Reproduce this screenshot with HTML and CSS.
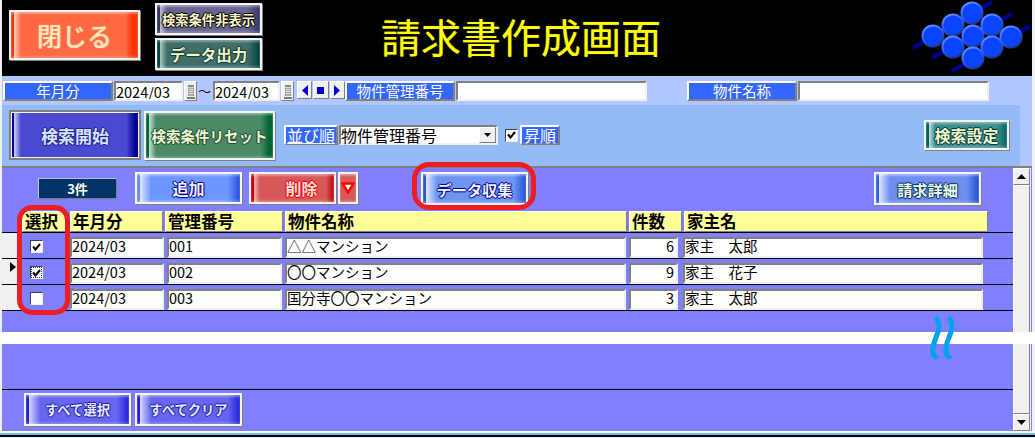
FILE: index.html
```html
<!DOCTYPE html>
<html lang="ja">
<head>
<meta charset="utf-8">
<title>請求書作成画面</title>
<link rel="stylesheet" href="styles.css">
</head>
<body>
<div class="window">
  <header class="top">
    <button class="btn close">閉じる</button>
    <div class="top-stack">
      <button class="btn slate">検索条件非表示</button>
      <button class="btn teal-dark">データ出力</button>
    </div>
    <h1 class="title">請求書作成画面</h1>
    <svg class="logo" width="133" height="75" viewBox="0 0 133 75">
      <defs>
        <linearGradient id="rim" x1="0.2" y1="0" x2="0.7" y2="1">
          <stop offset="0" stop-color="#6f94ff"/>
          <stop offset="0.5" stop-color="#2a5cf0"/>
          <stop offset="1" stop-color="#1c2f78"/>
        </linearGradient>
      </defs>
      <g stroke="#000090" stroke-width="4">
        <line x1="13" y1="48" x2="92" y2="2"/>
        <line x1="32" y1="58" x2="112" y2="14"/>
        <line x1="52" y1="71" x2="130" y2="26"/>
      </g>
      <g fill="url(#rim)">
        <circle cx="33" cy="36" r="11.500"/>
        <circle cx="53" cy="25" r="11.500"/>
        <circle cx="72" cy="13" r="11.500"/>
        <circle cx="92" cy="25" r="11.500"/>
        <circle cx="111" cy="37" r="11.500"/>
        <circle cx="53" cy="47" r="11.500"/>
        <circle cx="73" cy="36" r="11.500"/>
        <circle cx="92" cy="47" r="11.500"/>
        <circle cx="73" cy="58" r="11.500"/>
      </g>
      <g fill="#0a44ff">
        <circle cx="33" cy="36" r="9.500"/>
        <circle cx="53" cy="25" r="9.500"/>
        <circle cx="72" cy="13" r="9.500"/>
        <circle cx="92" cy="25" r="9.500"/>
        <circle cx="111" cy="37" r="9.500"/>
        <circle cx="53" cy="47" r="9.500"/>
        <circle cx="73" cy="36" r="9.500"/>
        <circle cx="92" cy="47" r="9.500"/>
        <circle cx="73" cy="58" r="9.500"/>
      </g>
    </svg>
  </header>

  <section class="filter">
    <span class="label w-110">年月分</span>
    <input class="field w-69" value="2024/03">
    <button class="cal" aria-label="カレンダー"><svg width="8" height="15" viewBox="0 0 8 15"><path d="M1 1h6v11H1z" fill="#8a8a8a"/><path d="M1 3.500h6M1 5.500h6M1 7.500h6M1 9.500h6M3 3v9M5 3v9" stroke="#eee" stroke-width=".7"/><path d="M0 14h8" stroke="#000"/></svg></button>
    <span class="tilde">～</span>
    <input class="field w-67" value="2024/03">
    <button class="cal" aria-label="カレンダー"><svg width="8" height="15" viewBox="0 0 8 15"><path d="M1 1h6v11H1z" fill="#8a8a8a"/><path d="M1 3.500h6M1 5.500h6M1 7.500h6M1 9.500h6M3 3v9M5 3v9" stroke="#eee" stroke-width=".7"/><path d="M0 14h8" stroke="#000"/></svg></button>
    <div class="nav">
      <button class="nav-btn" aria-label="前"><svg width="6" height="11" viewBox="0 0 6 11"><path d="M6 0v11L0 5.500z" fill="#0000e0"/></svg></button>
      <button class="nav-btn" aria-label="今"><svg width="7" height="7" viewBox="0 0 7 7"><path d="M0 0h7v7H0z" fill="#0000c0"/></svg></button>
      <button class="nav-btn" aria-label="次"><svg width="6" height="11" viewBox="0 0 6 11"><path d="M0 0v11l6-5.500z" fill="#0000e0"/></svg></button>
    </div>
    <span class="label w-110">物件管理番号</span>
    <input class="field w-191">
    <span class="label w-110 gap-left">物件名称</span>
    <input class="field w-191">
  </section>

  <section class="search-wrap">
    <div class="search">
      <button class="btn start">検索開始</button>
      <button class="btn reset">検索条件リセット</button>
      <span class="label sort-label">並び順</span>
      <div class="select">
        <span class="select-text">物件管理番号</span>
        <span class="select-arrow"><svg width="7" height="4" viewBox="0 0 7 4"><path d="M0 0h7L3.500 4z" fill="#000"/></svg></span>
      </div>
      <span class="check sort-check"><svg width="9" height="8" viewBox="0 0 9 8"><path d="M1 3.500l2.500 3 4.500-5.500" fill="none" stroke="#000" stroke-width="2"/></svg></span>
      <span class="label asc-label">昇順</span>
      <button class="btn settings">検索設定</button>
    </div>
  </section>

  <main class="list">
    <div class="list-scroll">
      <div class="list-main">
        <div class="toolbar">
          <span class="count">3件</span>
          <button class="btn add">追加</button>
          <button class="btn del">削除</button>
          <button class="btn del-more" aria-label="削除メニュー"><svg width="14" height="12" viewBox="0 0 14 12"><path d="M1.500 1.500h11L7 10.500z" fill="#fff" stroke="#f00" stroke-width="2.500"/></svg></button>
          <button class="btn collect">データ収集</button>
          <button class="btn detail">請求詳細</button>
        </div>

        <div class="head">
          <span class="th c-sel">選択</span>
          <span class="th h-ym">年月分</span>
          <span class="th h-no">管理番号</span>
          <span class="th h-name">物件名称</span>
          <span class="th h-cnt">件数</span>
          <span class="th h-owner">家主名</span>
        </div>

        <div class="row">
          <span class="selector"></span>
          <span class="c-sel cell-check"><span class="check"><svg width="9" height="8" viewBox="0 0 9 8"><path d="M1 3.500l2.500 3 4.500-5.500" fill="none" stroke="#000" stroke-width="2"/></svg></span></span>
          <span class="td c-ym">2024/03</span>
          <span class="td c-no">001</span>
          <span class="td c-name">△△マンション</span>
          <span class="td c-cnt">6</span>
          <span class="td c-owner">家主　太郎</span>
        </div>
        <div class="row">
          <span class="selector"><svg class="pointer" width="6" height="10" viewBox="0 0 6 10"><path d="M0 0v10l6-5z" fill="#000"/></svg></span>
          <span class="c-sel cell-check"><span class="check focus"><svg width="9" height="8" viewBox="0 0 9 8"><path d="M1 3.500l2.500 3 4.500-5.500" fill="none" stroke="#000" stroke-width="2"/></svg></span></span>
          <span class="td c-ym">2024/03</span>
          <span class="td c-no">002</span>
          <span class="td c-name">〇〇マンション</span>
          <span class="td c-cnt">9</span>
          <span class="td c-owner">家主　花子</span>
        </div>
        <div class="row">
          <span class="selector"></span>
          <span class="c-sel cell-check"><span class="check"></span></span>
          <span class="td c-ym">2024/03</span>
          <span class="td c-no">003</span>
          <span class="td c-name">国分寺〇〇マンション</span>
          <span class="td c-cnt">3</span>
          <span class="td c-owner">家主　太郎</span>
        </div>

        <div class="band"></div>
        <div class="footer">
          <button class="btn all">すべて選択</button>
          <button class="btn all">すべてクリア</button>
        </div>
      </div>
      <div class="scrollbar">
        <button class="sb-btn" aria-label="上"><svg width="9" height="5" viewBox="0 0 9 5"><path d="M0 5h9L4.500 0z" fill="#000"/></svg></button>
        <div class="sb-track"></div>
        <button class="sb-btn" aria-label="下"><svg width="9" height="5" viewBox="0 0 9 5"><path d="M0 0h9L4.500 5z" fill="#000"/></svg></button>
      </div>
    </div>
  </main>
  <div class="base"></div>

  <div class="cut"></div>
  <div class="mark mark-check"></div>
  <div class="mark mark-collect"></div>
  <svg class="squiggle" width="30" height="50" viewBox="0 0 30 50"><path d="M8 5c2 3 3 6 1 13-2 6-6 13-5 20 0 3 2 5 3 5M21 5c2 3 3 6 1 13-2 6-6 13-5 20 0 3 2 5 3 5" fill="none" stroke="#00a2e8" stroke-width="5" stroke-linecap="round"/></svg>
</div>
</body>
</html>
```
FILE: styles.css
```css
* { box-sizing: border-box; }
html, body { margin: 0; padding: 0; }
body {
  width: 1035px;
  height: 438px;
  overflow: hidden;
  background: #f0f0f0;
  font-family: "Noto Sans CJK JP", "Liberation Sans", sans-serif;
  font-size: 14px;
  color: #000;
}
.window {
  position: relative;
  width: 1035px;
  height: 438px;
  padding: 0 3px 0 2px;
  display: flex;
  flex-direction: column;
}
button { font-family: inherit; padding: 0; margin: 0; }

/* header */
.top {
  height: 76px;
  background: #000;
  display: flex;
  align-items: flex-start;
  position: relative;
}
.top-stack {
  margin: 3px 0 0 15px;
  display: flex;
  flex-direction: column;
  gap: 3px;
}
.title {
  margin: 11px 0 0 119px;
  font-size: 40px;
  line-height: 50px;
  font-weight: 400;
  color: #ffff00;
  text-shadow: 0 0 1px #808000;
}
.logo { position: absolute; left: 898px; top: 0; }

/* generic bevel button */
.btn {
  display: inline-flex;
  align-items: center;
  justify-content: center;
  border: 2px solid #f4f4f4;
  outline: 0;
  flex: none;
  font-weight: 700;
  color: #fff;
  --edge: #000;
  box-shadow: 1px 1px 0 #808080, inset 0 2px 2px rgba(255, 255, 255, .35), inset 0 -2px 2px rgba(255, 255, 255, .2);
  text-shadow: -1px 0 var(--edge), 1px 0 var(--edge), 0 -1px var(--edge), 0 1px var(--edge), 0 0 2px var(--edge);
}
.close {
  width: 131px; height: 50px; margin: 10px 0 0 7px;
  font-size: 25px; font-weight: 500; color: #ffe6b8; text-shadow: 0 0 1px #ffe6b8;
  background: linear-gradient(90deg, #ff3300 0 3px, #ffd0c0 3px, #ff6a45 10px, #ff6a45 90%, #ff3300 96%);
}
.slate {
  width: 107px; height: 32px; font-size: 13.300px; color: #fff8c8;
  background: linear-gradient(90deg, #333366 0 3px, #bcbcd8 3px, #666690 10px, #666690 88%, #333366 100%);
}
.teal-dark {
  width: 107px; height: 32px; font-size: 15.500px; color: #f0f8c8; --edge: #103838;
  background: linear-gradient(90deg, #004040 0 3px, #a8c8c0 3px, #3f6f68 10px, #3f6f68 88%, #004040 100%);
}
.start {
  width: 132px; height: 50px; font-size: 17px; color: #d8e4ff; --edge: #20208c;
  background: linear-gradient(90deg, #000099 0 3px, #d0d0f8 3px, #4a4ad0 10px, #4a4ad0 90%, #000099 97%);
  border-color: #808080;
  box-shadow: inset 0 0 0 1px #f4f4f4;
}
.reset {
  width: 131px; height: 49px; margin-left: 3px; font-size: 14.500px; color: #f0f8d0; --edge: #1c4c34;
  background: linear-gradient(90deg, #006633 0 3px, #c8e0d0 3px, #4a8a68 10px, #4a8a68 90%, #006633 97%);
}
.settings {
  width: 85px; height: 30px; margin-left: auto; margin-right: 11px; font-size: 16px; color: #f0f8d0; --edge: #003838;
  background: linear-gradient(90deg, #006060 0 3px, #c8e0e0 3px, #3f8f8f 9px, #3f8f8f 88%, #006060 100%);
}
.add {
  width: 107px; height: 32px; margin-left: 18px; font-size: 16px; color: #f4f4ff; --edge: #000090;
  background: linear-gradient(90deg, #6688ee 0 3px, #e0e8ff 3px, #6e96ff 14px, #6e96ff 88%, #1f4fd8 100%);
}
.del {
  width: 87px; height: 32px; margin-left: 7px; padding-left: 18px; font-size: 16px; color: #ffe0e0; --edge: #f00000;
  background: linear-gradient(90deg, #c00000 0 3px, #f0b0b0 3px, #d85858 9px, #d85858 90%, #c00000 100%);
}
.del-more {
  width: 20px; height: 32px; margin-left: 2px;
  background: #d85858;
}
.collect {
  width: 107px; height: 33px; margin-left: 63px; font-size: 15.200px; color: #eef4ff; --edge: #000090;
  background: linear-gradient(90deg, #2a55c8 0 3px, #e0e8ff 3px, #6e96f0 14px, #6e96f0 88%, #1f4fd8 100%);
}
.detail {
  width: 107px; height: 33px; margin-left: 346px; font-size: 15.200px; color: #f0fbe0; --edge: #003070;
  background: linear-gradient(90deg, #3060e0 0 3px, #e0e8ff 3px, #6e8ef0 14px, #6e8ef0 88%, #2050d0 100%);
}
.all {
  width: 107px; height: 33px; font-size: 13.300px; color: #e8e8ff; --edge: #2020a0;
  background: linear-gradient(90deg, #2020d0 0 3px, #d8d8ff 3px, #6666f0 14px, #6666f0 88%, #2020d8 100%);
}

/* filter bar */
.filter {
  height: 29px;
  background: #b0c8ff;
  display: flex;
  align-items: flex-start;
  padding: 5px 0 0 1px;
}
.label {
  display: inline-flex;
  align-items: center;
  justify-content: center;
  height: 20px;
  flex: none;
  background: #3366ff;
  color: #fff;
  font-size: 14.500px;
  border: 2px solid;
  border-color: #fff #808080 #808080 #fff;
  line-height: 1;
}
.w-110 { width: 110px; }
.gap-left { margin-left: 40px; }
.field {
  height: 20px;
  flex: none;
  border: 2px solid;
  border-color: #808080 #f0f0f0 #f0f0f0 #808080;
  background: #fff;
  font-family: "Noto Sans CJK JP", "Liberation Sans", sans-serif;
  font-size: 14.500px;
  padding: 0;
  margin: 0 0 0 1px;
  color: #000;
  outline: 0;
}
.w-69 { width: 69px; }
.w-67 { width: 67px; }
.w-191 { width: 191px; }
.cal {
  width: 13px; height: 20px; margin-left: 1px; flex: none;
  background: #f0f0f0;
  border: 1px solid; border-color: #fff #808080 #808080 #fff;
  display: flex; align-items: center; justify-content: center;
}
.tilde { width: 15px; height: 20px; line-height: 20px; text-align: center; font-size: 13px; flex: none; }
.nav { display: flex; gap: 1px; margin: 0 0 0 3px; flex: none; }
.nav-btn {
  width: 15.330px; height: 18px;
  background: #f0f0f0;
  border: 1px solid; border-color: #fff #808080 #808080 #fff;
  display: flex; align-items: center; justify-content: center;
}

/* search bar */
.search-wrap { height: 61px; background: #b0c8ff; }
.search {
  width: 1018px;
  height: 61px;
  background: #94bbf5;
  display: flex;
  align-items: center;
  padding: 0 0 1px 7px;
}
.sort-label { width: 54px; margin-left: 9px; font-size: 16px; text-decoration: underline; }
.select {
  width: 159px; height: 20px; margin-left: 1px; flex: none;
  background: #fff;
  border: 2px solid; border-color: #808080 #f0f0f0 #f0f0f0 #808080;
  display: flex; align-items: center; justify-content: space-between;
  font-size: 16px;
}
.select-text { line-height: 1; }
.select-arrow {
  width: 17px; height: 16px;
  background: #f0f0f0;
  border: 1px solid; border-color: #fff #808080 #808080 #fff;
  display: flex; align-items: center; justify-content: center;
}
.check {
  width: 13px; height: 13px; flex: none;
  background: #fff;
  border: 1px solid; border-color: #404040 #f0f0f0 #f0f0f0 #404040;
  display: flex; align-items: center; justify-content: center;
}
.focus { outline: 1px dotted #333; outline-offset: -2px; }
.sort-check { margin-left: 7px; }
.asc-label { width: 40px; margin-left: 2px; font-size: 16px; }

/* list */
.list {
  flex: none;
  height: 265px;
  border-top: 2px solid #808080;
  background: #8080ff;
}
.list-scroll { display: flex; height: 100%; }
.list-main { width: 1011px; display: flex; flex-direction: column; }
.toolbar {
  height: 43px;
  display: flex;
  align-items: flex-start;
  padding: 4px 0 0 36px;
}
.count {
  width: 79px; height: 21px; margin-top: 6px; flex: none;
  background: #003366;
  color: #fff;
  font-size: 13px;
  font-weight: 700;
  text-align: center;
  line-height: 19px;
  border: 1px solid; border-color: #c0c0e0 #808080 #808080 #c0c0e0;
}
.head { height: 21px; flex: none; display: flex; gap: 2px; padding-left: 20px; }
.th {
  height: 21px;
  flex: none;
  background: #ffff99;
  border: 1px solid;
  border-color: #fff #808080 #808080 #fff;
  font-size: 16.500px;
  font-weight: 700;
  line-height: 18px;
  padding-left: 2px;
  white-space: nowrap;
}
.c-sel { width: 46px; flex: none; }
.h-ym { width: 93px; }
.h-no { width: 118px; }
.h-name { width: 342px; }
.h-cnt { width: 53px; }
.h-owner { width: 304px; }

.row {
  height: 26px;
  flex: none;
  display: flex;
  align-items: flex-start;
  border-top: 1px solid #000;
}
.selector {
  width: 20px;
  height: 25px;
  flex: none;
  background: #f0f0f0;
  padding: 3px 0 0 8px;
}
.pointer { display: block; }
.cell-check {
  height: 25px; display: flex; align-items: flex-start; padding: 7px 0 0 8px;
}
.td {
  height: 21px;
  flex: none;
  margin-top: 4px;
  background: #fff;
  border: 2px solid;
  border-color: #808080 #f0f0f0 #f0f0f0 #808080;
  font-size: 14.500px;
  line-height: 14px;
  white-space: nowrap;
}
.c-ym { width: 94px; margin-left: 2px; }
.c-no { width: 115px; margin-left: 3px; }
.c-name { width: 341px; margin-left: 3px; }
.c-cnt { width: 49px; margin-left: 3px; text-align: right; padding-right: 2px; }
.c-owner { width: 300px; margin-left: 5px; }
.band { flex: none; height: 80px; border-top: 1px solid #000; border-bottom: 1px solid #000; }
.footer { display: flex; gap: 4px; padding: 3px 0 0 22px; }

.scrollbar {
  width: 18px;
  margin-left: 0;
  display: flex;
  flex-direction: column;
  background: #f0f0f0;
}
.sb-btn {
  width: 17px; height: 17px; flex: none;
  background: #f0f0f0;
  border: 1px solid; border-color: #fff #808080 #808080 #fff;
  display: flex; align-items: center; justify-content: center;
}
.sb-track { flex: 1; width: 17px; background: #f0f0f0; border: 1px solid; border-color: #fff #808080 #808080 #fff; }

.base {
  flex: none;
  height: 7px;
  background: linear-gradient(#fff 0 2px, #6cc3e6 2px 4px, #000 4px 6px, #f0f0f0 6px);
  margin: 0 -3px 0 -2px;
}

/* overlays: torn-page band and red annotations */
.cut { position: absolute; left: 0; right: 0; top: 332px; height: 12px; background: #fff; }
.mark { position: absolute; border: 5px solid #ee1c25; pointer-events: none; }
.mark-check { left: 17px; top: 205px; width: 53px; height: 110px; border-radius: 15px; }
.mark-collect { left: 412px; top: 162px; width: 124px; height: 48px; border-radius: 17px; }
.squiggle { position: absolute; left: 929px; top: 314px; }
```
